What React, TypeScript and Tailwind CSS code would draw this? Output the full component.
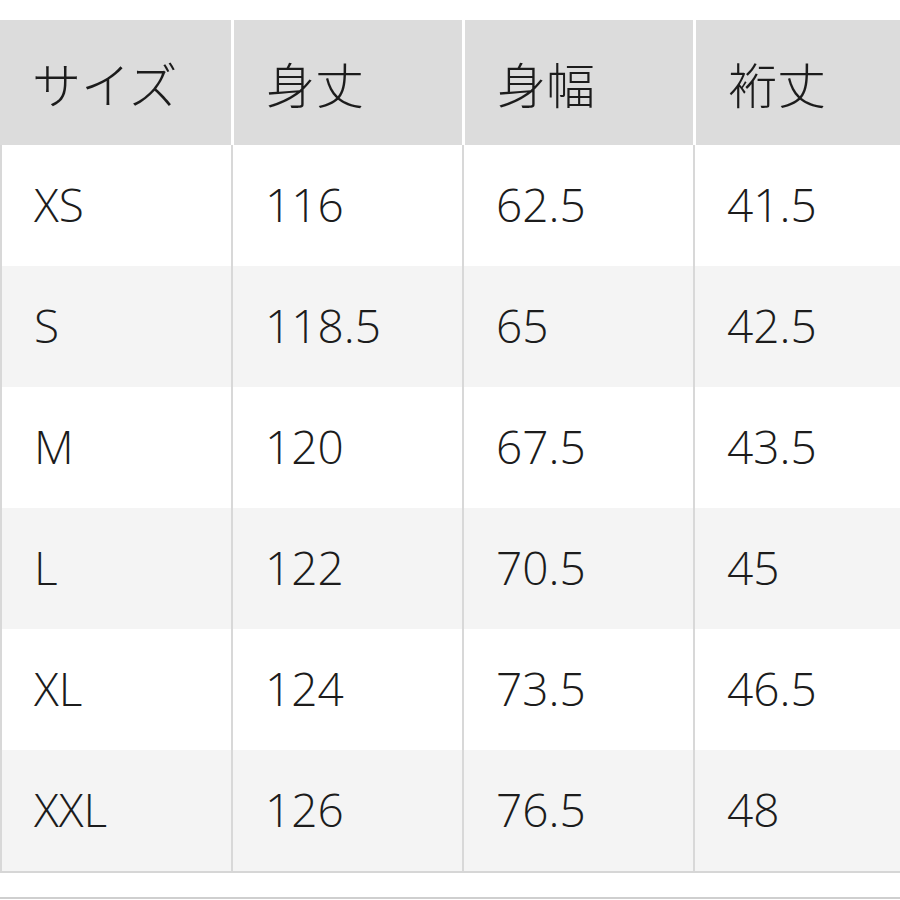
import React from 'react';

const headers = ['サイズ', '身丈', '身幅', '裄丈'];

const rows: string[][] = [
  ['XS', '116', '62.5', '41.5'],
  ['S', '118.5', '65', '42.5'],
  ['M', '120', '67.5', '43.5'],
  ['L', '122', '70.5', '45'],
  ['XL', '124', '73.5', '46.5'],
  ['XXL', '126', '76.5', '48'],
];

const cols = 'grid grid-cols-[231px_231px_231px_1fr]';

const App: React.FC = () => {
  return (
    <div
      className="w-[900px] h-[900px] bg-white text-[#1c1c1c] font-light pt-[20px] flex flex-col overflow-hidden"
      style={{ fontFamily: '"Open Sans", "Noto Sans CJK JP", sans-serif' }}
    >
      <div className="border-b-2 border-[#d6d6d6]">
        <div
          className={`${cols} h-[125px] bg-[#dcdcdc]`}
          style={{ fontFamily: '"Noto Sans CJK JP", sans-serif' }}
        >
          {headers.map((h, i) => (
            <div
              key={h}
              className={`flex items-center pl-[32px] text-[49px] leading-none ${i > 0 ? 'border-l-[3px] border-white' : ''}`}
            >
              {h}
            </div>
          ))}
        </div>
        {rows.map((row, r) => (
          <div key={row[0]} className={`${cols} h-[121px] ${r % 2 === 1 ? 'bg-[#f4f4f4]' : 'bg-white'}`}>
            {row.map((cell, i) => (
              <div
                key={i}
                className="flex items-center pl-[32px] pb-[4px] border-l-2 border-[#d8d8d8] text-[46px] leading-none"
              >
                {cell}
              </div>
            ))}
          </div>
        ))}
      </div>
      <div className="flex-1" />
      <div className="h-[2px] bg-[#cfcfcf] mb-[1px]" />
    </div>
  );
};

export default App;
